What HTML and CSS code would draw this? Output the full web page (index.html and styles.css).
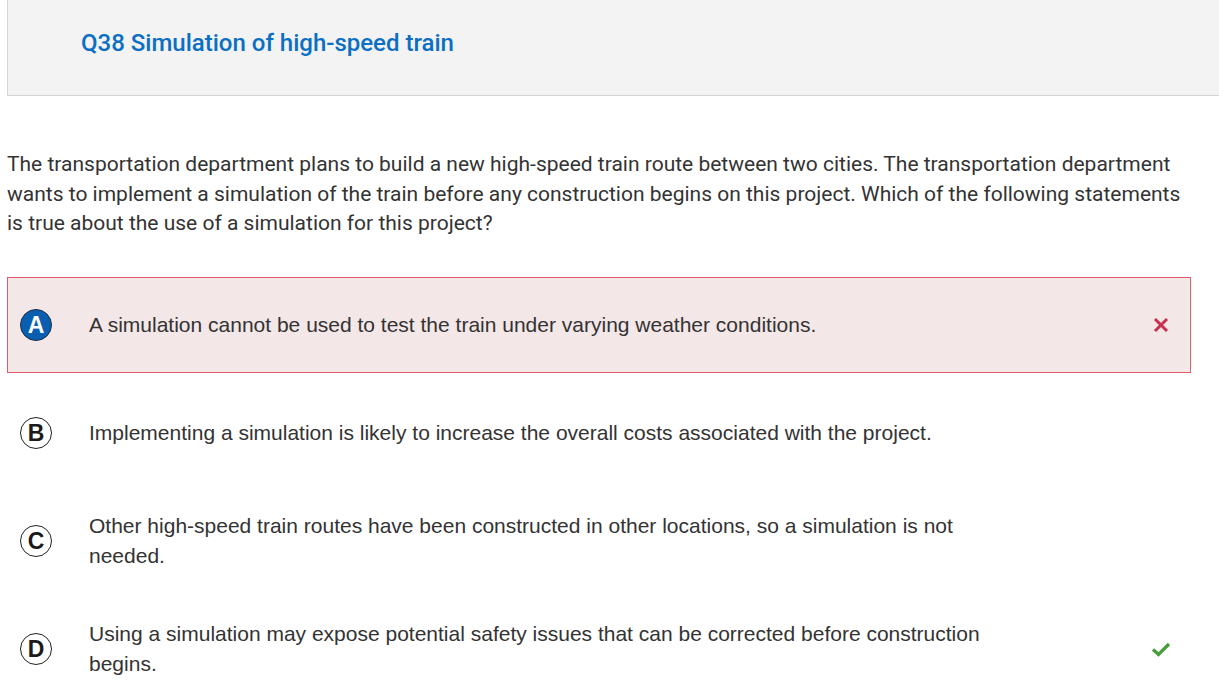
FILE: index.html
```html
<!DOCTYPE html>
<html lang="en">
<head>
<meta charset="utf-8">
<title>Q38 Simulation of high-speed train</title>
<link rel="stylesheet" href="styles.css">
</head>
<body>
<div class="page">
  <header class="qhead">
    <h1 class="qtitle">Q38 Simulation of high-speed train</h1>
  </header>
  <p class="stem">The transportation department plans to build a new high-speed train route between two cities. The transportation department wants to implement a simulation of the train before any construction begins on this project. Which of the following statements is true about the use of a simulation for this project?</p>
  <div class="options">
    <div class="opt opt-wrong">
      <span class="badge badge-sel">A</span>
      <span class="opt-text">A simulation cannot be used to test the train under varying weather conditions.</span>
      <span class="mark">
        <svg width="16" height="16" viewBox="0 0 16 16"><path d="M2 2 L14 14 M14 2 L2 14" stroke="#c9304f" stroke-width="3" fill="none"/></svg>
      </span>
    </div>
    <div class="opt">
      <span class="badge">B</span>
      <span class="opt-text">Implementing a simulation is likely to increase the overall costs associated with the project.</span>
      <span class="mark"></span>
    </div>
    <div class="opt">
      <span class="badge">C</span>
      <span class="opt-text">Other high-speed train routes have been constructed in other locations, so a simulation is not needed.</span>
      <span class="mark"></span>
    </div>
    <div class="opt">
      <span class="badge">D</span>
      <span class="opt-text">Using a simulation may expose potential safety issues that can be corrected before construction begins.</span>
      <span class="mark mark-ok">
        <svg width="20" height="16" viewBox="0 0 20 16"><path d="M2 8.5 L7.5 13.5 L18 3" stroke="#4a9d3c" stroke-width="3.4" fill="none"/></svg>
      </span>
    </div>
  </div>
</div>
</body>
</html>
```
FILE: styles.css
```css
html, body {
  margin: 0;
  padding: 0;
  background: #ffffff;
}
.page {
  padding-left: 7px;
}
.qhead {
  height: 95px;
  background: #f3f3f3;
  border-left: 1px solid #d4d4d4;
  border-bottom: 1px solid #d4d4d4;
  display: flex;
  align-items: center;
  padding-left: 73px;
  box-sizing: content-box;
}
.qtitle {
  margin: 0;
  margin-top: -10px;
  font-family: Roboto, "Liberation Sans", sans-serif;
  font-weight: 500;
  font-size: 24px;
  color: #0b6fc3;
}
.stem {
  margin: 54px 28px 38px 0;
  font-family: Roboto, "Liberation Sans", sans-serif;
  font-size: 21px;
  line-height: 29.5px;
  color: #333333;
}
.options {
  display: flex;
  flex-direction: column;
  gap: 12px;
  margin-right: 28px;
}
.opt {
  height: 94px;
  border: 1px solid transparent;
  display: flex;
  align-items: center;
  padding-left: 12px;
  font-family: "Liberation Sans", Arial, sans-serif;
  font-size: 21px;
  line-height: 30px;
  color: #333333;
}
.opt-wrong {
  background: #f3e7e8;
  border-color: #e05b6c;
}
.badge {
  flex: 0 0 auto;
  width: 30px;
  height: 30px;
  border: 1.5px solid #222;
  border-radius: 50%;
  display: flex;
  align-items: center;
  justify-content: center;
  font-family: "Liberation Sans", Arial, sans-serif;
  font-weight: bold;
  font-size: 23px;
  color: #1a1a1a;
  margin-right: 37px;
}
.badge-sel {
  background: #0a5eb0;
  border-color: #1f2f45;
  color: #ffffff;
}
.opt-text {
  flex: 0 1 910px;
}
.mark {
  flex: 1;
  display: flex;
  justify-content: flex-end;
  padding-right: 21px;
}
.mark-ok {
  padding-right: 19px;
}
.mark svg {
  display: block;
}
```
